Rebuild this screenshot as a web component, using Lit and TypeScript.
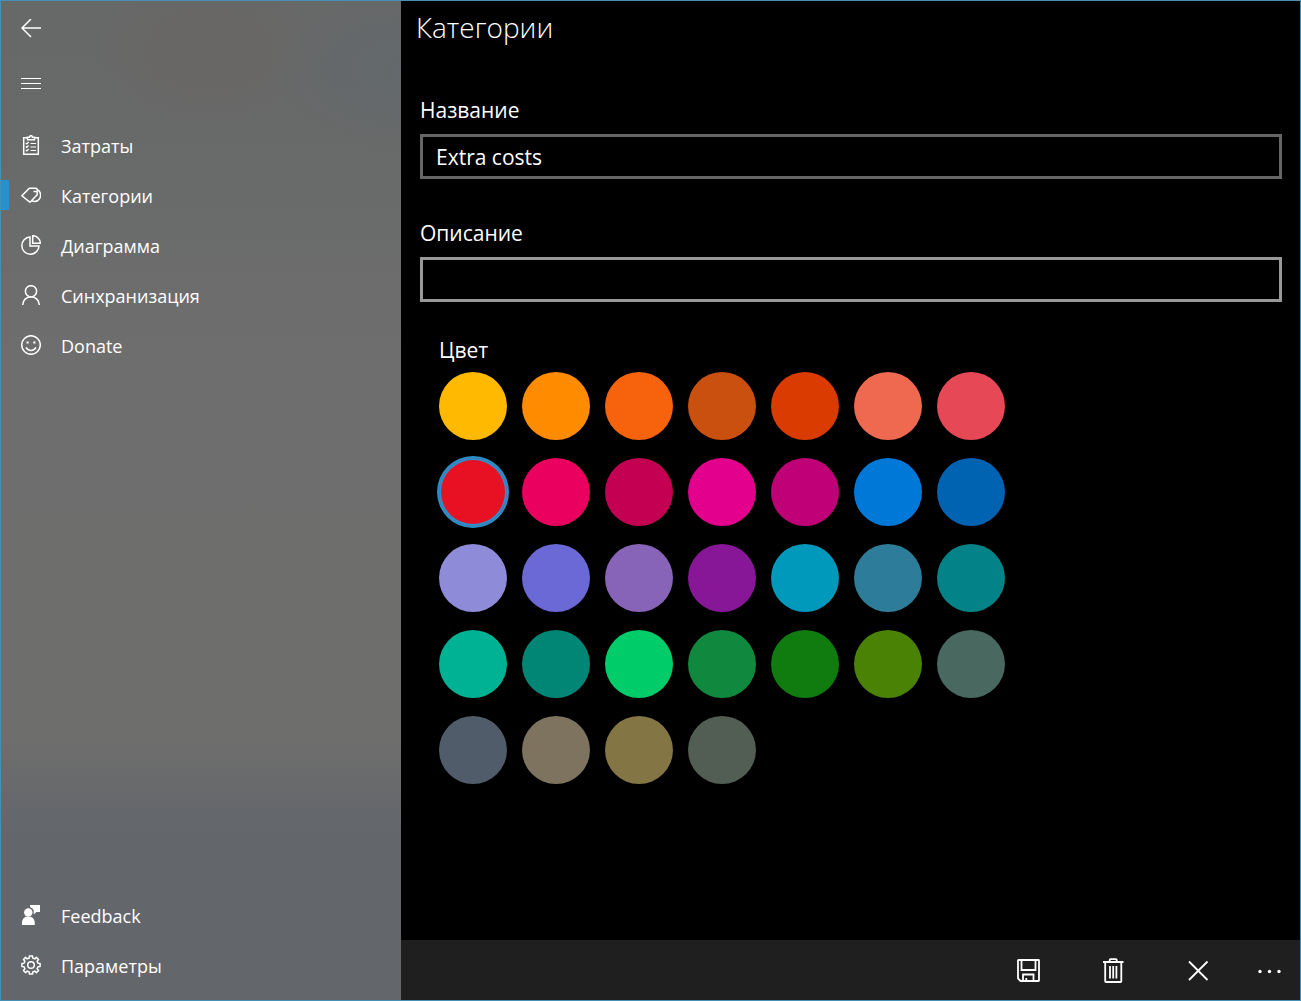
import { LitElement, html, css, svg } from "lit";
import { customElement, state } from "lit/decorators.js";

const icons = {
  back: svg`<path d="M20 9H1M10 0 1 9l9 9"/>`,
  menu: svg`<path d="M0 4.5h20M0 9.5h20M0 14.5h20" stroke-width="1"/>`,
  expenses: svg`<path d="M6.500 2.700H2.700v16.600h14.600V2.700h-3.800"/><path d="M6.500 4.800V2.200h2a1.500 1.500 0 0 1 3 0h2v2.600z"/><path d="m4.800 8 1 1 1.800-2M4.800 11.500l1 1 1.800-2M4.800 15l1 1 1.800-2M9.500 8.500H15M9.500 12H15M9.500 15.500H15" stroke-width="1.200"/>`,
  categories: svg`<path d="M.9 10.800 8.300 3.200h6.400c1 0 1.500.6 1.500 1.500v5L9 17.300z"/><path d="M16.200 4.300a6.600 6.600 0 0 1 .6 11.200c-2 1.300-4.200 1-6.100.2M12.500 6.500h3.500"/>`,
  chart: svg`<path d="M9 2a8.600 8.600 0 1 0 9 9H9z"/><path d="M11.700.7v7.600h7.600A7.600 7.600 0 0 0 11.700.7z"/>`,
  person: svg`<circle cx="10" cy="6.300" r="5.600"/><path d="M1.700 20a8.300 8.300 0 0 1 16.600 0"/>`,
  smile: svg`<circle cx="10" cy="10" r="9.300"/><path d="M5 12.300a5.600 5.600 0 0 0 10 0"/><path d="M6.600 6.400v2.200M13.400 6.400v2.200" stroke-width="2.200"/>`,
  feedback: svg`<g fill="currentColor" stroke="none"><circle cx="7.300" cy="7.500" r="4.200"/><path d="M1 20v-2c0-3.600 2-6.200 5-6.200h2.600c3 0 5.200 2.600 5.200 6.200v2zM9 0h10v7h-3.500L12.700 9.500V5.300A6 6 0 0 0 9 2z"/></g>`,
  settings: svg`<circle cx="10" cy="10" r="3.300"/><path d="m8.300 3 .1-2.100h3.200l.1 2.100 2.100.9 1.600-1.500 2.200 2.200L16.100 6.200l.9 2.100 2.100.1v3.200l-2.100.1-.9 2.100 1.500 1.600-2.200 2.200-1.600-1.500-2.100.9-.1 2.100H8.400L8.300 17l-2.100-.9-1.600 1.500-2.200-2.200 1.500-1.600-.9-2.100-2.100-.1V8.400L3 8.300l.9-2.100-1.500-1.600 2.200-2.200 1.600 1.500z" stroke-linejoin="round"/>`,
};

const bar = {
  save: svg`<path d="M2 2.500q0-.5.500-.5h20q.5 0 .5.500v20q0 .5-.5.500H4.500L2 20.500z"/><path d="M5.500 2v10h14V2M7 23v-6.500h10.500V23M10.300 23v-3"/>`,
  remove: svg`<path d="M2 4h20.500M4.200 4v19.200q0 .8.800.8h14.500q.8 0 .8-.8V4M8.700 4V2q0-.8.800-.8h5.400q.8 0 .8.800v2M9 8v12.500M12.200 8v12.500M15.400 8v12.500"/>`,
  cancel: svg`<path d="m3 3.500 18.500 18.500M21.500 3.500 3 22"/>`,
  more: svg`<g fill="currentColor" stroke="none"><circle cx="2" cy="13.500" r="1.700"/><circle cx="11.500" cy="13.500" r="1.700"/><circle cx="21" cy="13.500" r="1.700"/></g>`,
};

const mainNav = [
  { id: "expenses", label: "Затраты" },
  { id: "categories", label: "Категории" },
  { id: "chart", label: "Диаграмма" },
  { id: "person", label: "Синхранизация" },
  { id: "smile", label: "Donate" },
];
const footNav = [
  { id: "feedback", label: "Feedback" },
  { id: "settings", label: "Параметры" },
];

const palette = [
  "#ffb900", "#ff8c00", "#f7630c", "#ca5010", "#da3b01", "#ef6950", "#e74856",
  "#e81123", "#ea005e", "#c30052", "#e3008c", "#bf0077", "#0078d7", "#0063b1",
  "#8e8cd8", "#6b69d6", "#8764b8", "#881798", "#0099bc", "#2d7d9a", "#038387",
  "#00b294", "#018574", "#00cc6a", "#10893e", "#107c10", "#498205", "#486860",
  "#515c6b", "#7e735f", "#847545", "#525e54",
];

@customElement("app-root")
export class AppRoot extends LitElement {
  @state() private color = "#e81123";
  @state() private page = "categories";

  static styles = css`
    :host {
      display: block;
      color: #fff;
      font-family: "Open Sans", "Noto Sans", sans-serif;
    }
    * { box-sizing: border-box; }
    button, input {
      font: inherit;
      color: inherit;
      margin: 0;
    }
    button {
      display: flex;
      align-items: center;
      justify-content: center;
      padding: 0;
      border: 0;
      background: none;
    }
    svg {
      display: block;
      flex: none;
      fill: none;
      stroke: currentColor;
      stroke-width: 1.5;
    }
    .window {
      display: flex;
      min-height: 100vh;
      border: 1px solid #4690b5;
      background: #000;
    }
    .sidebar {
      display: flex;
      flex-direction: column;
      flex: 0 1 400px;
      padding-bottom: 10px;
      background:
        radial-gradient(ellipse 130px 80px at 100% 7%, #63696c, #63696c00),
        radial-gradient(ellipse 120px 80px at 52% 5%, #696765, #69676500),
        linear-gradient(#676868, #686969 14%, #6e6e6e 35%, #6e6e6d 74%, #63666b 83%, #63666b);
    }
    .square { width: 60px; height: 55px; }
    nav { display: flex; flex-direction: column; }
    .top { flex: 1; padding-top: 9px; }
    .item {
      display: flex;
      align-items: center;
      height: 50px;
      color: inherit;
      font-size: 18px;
      line-height: 24px;
      text-decoration: none;
    }
    .item::before {
      content: "";
      width: 8px;
      height: 30px;
      margin-right: 12px;
    }
    .item.active::before { background: #2791cd; }
    .item span { margin: 2px 0 0 20px; }
    main {
      display: flex;
      flex-direction: column;
      flex: 1;
      min-width: 0;
    }
    h1 {
      margin: 0;
      padding: 5px 15px 0;
      font-size: 28px;
      line-height: 42px;
      font-weight: 350;
    }
    form {
      flex: 1;
      padding: 47px 18px 0 19px;
      font-size: 21px;
      line-height: 30px;
    }
    .field + .field { margin-top: 39px; }
    .field label { display: block; }
    .text {
      display: block;
      width: 100%;
      height: 45px;
      margin-top: 9px;
      padding: 0 13px;
      border: 3px solid #666;
      border-radius: 0;
      outline: 0;
      background: #000;
    }
    .hover { border-color: #999; }
    fieldset {
      margin: 33px 0 0;
      padding: 0 19px 20px;
      border: 0;
    }
    legend { padding: 0; margin-bottom: 7px; }
    .swatches {
      display: grid;
      grid-template-columns: repeat(7, 68px);
      gap: 18px 15px;
    }
    .swatch {
      appearance: none;
      width: 68px;
      height: 68px;
      border-radius: 50%;
    }
    .swatch:checked {
      box-shadow: 0 0 0 2px #2791cd, inset 0 0 0 2px #2791cd;
    }
    .commands {
      display: flex;
      justify-content: flex-end;
      height: 60px;
      background: #1f1f1f;
    }
    .command { width: 85px; }
    .command.more { width: 59px; }
    .command svg { stroke-width: 1.8; }
  `;

  private icon(id: string) {
    return html`<svg width="20" height="20" viewBox="0 0 20 20" aria-hidden="true">${icons[id as keyof typeof icons]}</svg>`;
  }

  private link(item: { id: string; label: string }) {
    const active = item.id === this.page;
    return html`<a class="item ${active ? "active" : ""}" href="#${item.id}"
      @click=${() => (this.page = item.id)}>${this.icon(item.id)}<span>${item.label}</span></a>`;
  }

  private command(id: keyof typeof bar, label: string) {
    return html`<button type="button" class="command ${id}" aria-label=${label}>
      <svg width="25" height="25" viewBox="0 0 25 25" aria-hidden="true">${bar[id]}</svg>
    </button>`;
  }

  render() {
    return html`
      <div class="window">
        <aside class="sidebar">
          <button class="square" type="button" aria-label="Назад">${this.icon("back")}</button>
          <button class="square" type="button" aria-label="Меню">${this.icon("menu")}</button>
          <nav class="top">${mainNav.map((i) => this.link(i))}</nav>
          <nav>${footNav.map((i) => this.link(i))}</nav>
        </aside>
        <main>
          <h1>Категории</h1>
          <form>
            <div class="field">
              <label for="name">Название</label>
              <input class="text" id="name" type="text" value="Extra costs">
            </div>
            <div class="field">
              <label for="about">Описание</label>
              <input class="text hover" id="about" type="text">
            </div>
            <fieldset>
              <legend>Цвет</legend>
              <div class="swatches">
                ${palette.map((c) => html`<input class="swatch" type="radio" name="color"
                  aria-label=${c} .checked=${c === this.color}
                  style="background:${c}" @change=${() => (this.color = c)}>`)}
              </div>
            </fieldset>
          </form>
          <div class="commands">
            ${this.command("save", "Сохранить")}
            ${this.command("remove", "Удалить")}
            ${this.command("cancel", "Отмена")}
            ${this.command("more", "Ещё")}
          </div>
        </main>
      </div>
    `;
  }
}
